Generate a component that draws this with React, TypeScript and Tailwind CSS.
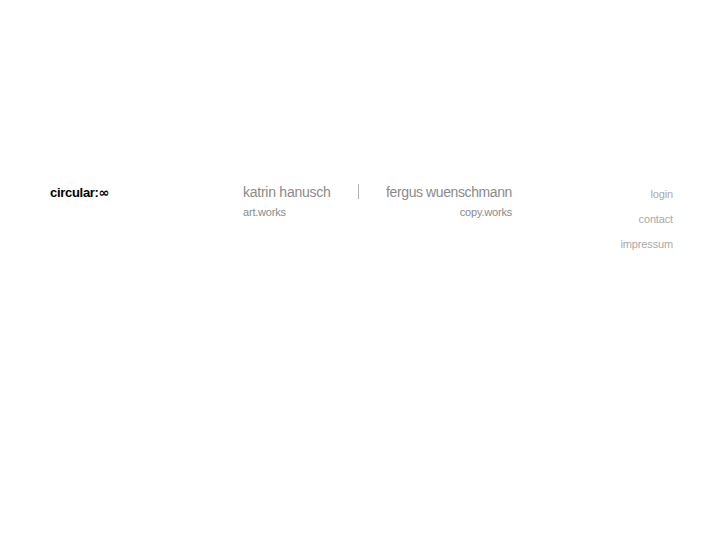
export default function App() {
  return (
    <div className="w-[727px] h-[545px] bg-white" style={{ fontFamily: '"Liberation Sans", Arial, sans-serif' }}>
      <div className="flex pt-[184px] pl-[50px] pr-[54px]">
        <div className="w-[193px] text-[13px] font-bold text-black tracking-[-0.3px] leading-[16px] pt-[1px]">
          circular:<span className="font-['DejaVu_Sans',sans-serif] text-[13px] tracking-[-0.5px]">∞</span>
        </div>
        <div className="w-[269px] flex flex-col">
          <div className="flex items-start text-[14px] text-[#8a8a8a] leading-[16px]">
            <span className="w-[115px] tracking-[-0.25px]">katrin hanusch</span>
            <span className="w-px h-[15px] bg-[#b0b0b0]" />
            <span className="flex-1 text-right tracking-[-0.4px]">fergus wuenschmann</span>
          </div>
          <div className="flex justify-between text-[11px] text-[#8a8a8a] leading-[14px] mt-[5px] tracking-[-0.2px]">
            <span>art.works</span>
            <span>copy.works</span>
          </div>
        </div>
        <div className="flex-1 flex flex-col items-end text-[11px] text-[#aaaaaa] leading-[14px] tracking-[-0.15px] pt-[3px] gap-[11px]">
          <span>login</span>
          <span>contact</span>
          <span>impressum</span>
        </div>
      </div>
    </div>
  );
}
